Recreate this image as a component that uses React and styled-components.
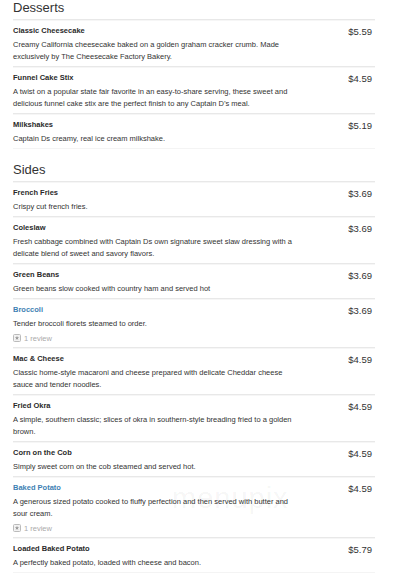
import styled, { createGlobalStyle } from 'styled-components'

const GlobalStyle = createGlobalStyle`
  body {
    margin: 0;
    background: #fff;
    font-family: "Liberation Sans", Arial, sans-serif;
    color: #333;
  }
`

const menu = [
  {
    title: 'Desserts',
    items: [
      { name: 'Classic Cheesecake', price: '$5.59', desc: 'Creamy California cheesecake baked on a golden graham cracker crumb. Made exclusively by The Cheesecake Factory Bakery.' },
      { name: 'Funnel Cake Stix', price: '$4.59', desc: 'A twist on a popular state fair favorite in an easy-to-share serving, these sweet and delicious funnel cake stix are the perfect finish to any Captain D\u2019s meal.' },
      { name: 'Milkshakes', price: '$5.19', desc: 'Captain Ds creamy, real ice cream milkshake.' },
    ],
  },
  {
    title: 'Sides',
    items: [
      { name: 'French Fries', price: '$3.69', desc: 'Crispy cut french fries.' },
      { name: 'Coleslaw', price: '$3.69', desc: 'Fresh cabbage combined with Captain Ds own signature sweet slaw dressing with a delicate blend of sweet and savory flavors.' },
      { name: 'Green Beans', price: '$3.69', desc: 'Green beans slow cooked with country ham and served hot' },
      { name: 'Broccoli', price: '$3.69', desc: 'Tender broccoli florets steamed to order.', reviews: 1 },
      { name: 'Mac & Cheese', price: '$4.59', desc: 'Classic home-style macaroni and cheese prepared with delicate Cheddar cheese sauce and tender noodles.' },
      { name: 'Fried Okra', price: '$4.59', desc: 'A simple, southern classic; slices of okra in southern-style breading fried to a golden brown.' },
      { name: 'Corn on the Cob', price: '$4.59', desc: 'Simply sweet corn on the cob steamed and served hot.' },
      { name: 'Baked Potato', price: '$4.59', desc: 'A generous sized potato cooked to fluffy perfection and then served with butter and sour cream.', reviews: 1 },
      { name: 'Loaded Baked Potato', price: '$5.79', desc: 'A perfectly baked potato, loaded with cheese and bacon.' },
    ],
  },
]

const StarBox = () => (
  <svg width="8" height="8" viewBox="0 0 8 8">
    <rect x="0.5" y="0.5" width="7" height="7" rx="1" fill="#f2f2f2" stroke="#bbb" />
    <path d="M4 1.8 L4.6 3.3 L6.1 3.3 L4.9 4.2 L5.3 5.8 L4 4.9 L2.7 5.8 L3.1 4.2 L1.9 3.3 L3.4 3.3 Z" fill="#999" />
  </svg>
)

const App = () => {
  return (
    <Page>
      <GlobalStyle />
      {menu.map((section, si) => (
        <Section key={section.title}>
          <Heading first={si === 0}>{section.title}</Heading>
          {section.items.map((item) => (
            <Row key={item.name}>
              <Info>
                <Name linked={!!item.reviews}>{item.name}</Name>
                <Desc>{item.desc}</Desc>
                {item.reviews && (
                  <Review>
                    <StarBox />
                    <span>{item.reviews} review</span>
                  </Review>
                )}
              </Info>
              <Price>{item.price}</Price>
            </Row>
          ))}
        </Section>
      ))}
      <Watermark>menupix</Watermark>
    </Page>
  );
}

export default App;

const Page = styled.main`
  position: relative;
  width: 362px;
  padding: 0 0 20px 13px;
`

const Section = styled.section`
  display: flex;
  flex-direction: column;
`

const Heading = styled.h2`
  margin: ${(p) => (p.first ? '0' : '13px')} 0 3px;
  font-size: 13px;
  line-height: 16px;
  font-weight: normal;
  color: #333;
`

const Row = styled.div`
  display: flex;
  justify-content: space-between;
  align-items: flex-start;
  border-top: 1px solid #e8e8e8;
  box-shadow: inset 0 1px 0 #f6f6f6;
  padding: 5px 3px 3px 0;

  &:last-child {
    border-bottom: 1px solid #f4f4f4;
  }
`

const Info = styled.div`
  display: flex;
  flex-direction: column;
  gap: 2px;
  max-width: 282px;
`

const Name = styled.div`
  font-size: 7.5px;
  line-height: 12px;
  font-weight: bold;
  color: ${(p) => (p.linked ? '#3d7fb3' : '#2a2a2a')};
`

const Desc = styled.p`
  margin: 0;
  font-size: 7.5px;
  line-height: 12px;
  color: #333;
`

const Review = styled.div`
  display: flex;
  align-items: center;
  gap: 3px;
  height: 12px;
  font-size: 7.5px;
  color: #aaa;
`

const Price = styled.div`
  font-size: 9.5px;
  line-height: 14px;
  color: #333;
`

const Watermark = styled.div`
  position: absolute;
  left: 172px;
  top: 482px;
  font-size: 29px;
  letter-spacing: 1px;
  color: rgba(0, 0, 0, 0.05);
  pointer-events: none;
`
